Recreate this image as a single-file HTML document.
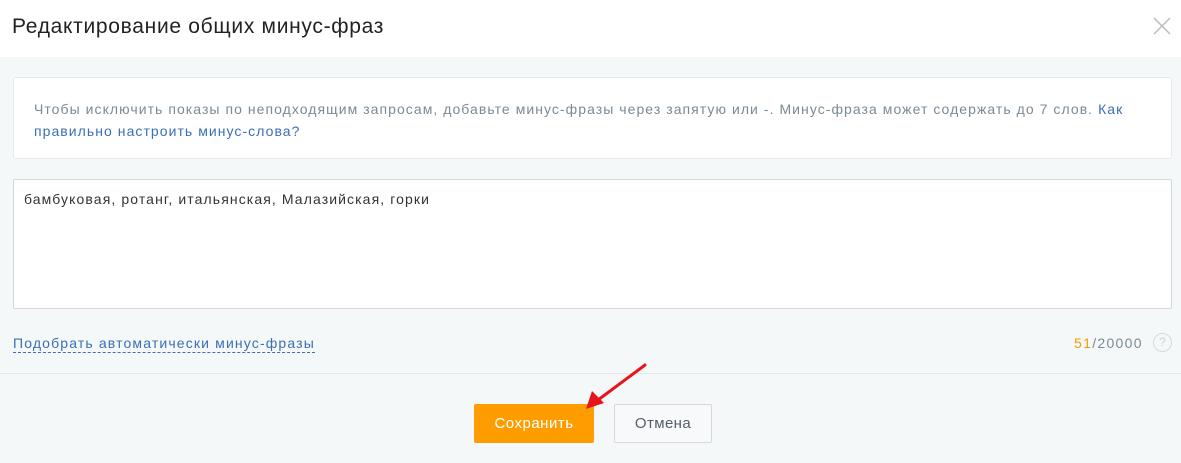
<!DOCTYPE html>
<html><head><meta charset="utf-8"><style>
body{margin:0;width:1181px;height:463px;overflow:hidden;background:#f5f8f9;font-family:"Liberation Sans",sans-serif;position:relative}
.hdr{position:absolute;left:0;top:0;width:1181px;height:57px;background:#fff}
.title{position:absolute;left:12px;top:15px;font-size:21px;color:#222;letter-spacing:0.7px}
.x{position:absolute;left:1153px;top:17px}
.info{position:absolute;left:13px;top:77px;width:1157px;height:80px;background:#fff;border:1px solid #e6eaec;border-radius:3px}
.info p{margin:0;position:absolute;left:20px;top:20px;right:20px;font-size:14px;line-height:22px;color:#7b8a94;letter-spacing:1.05px}
.info a{color:#3a6fb4;text-decoration:none}
.ta{position:absolute;left:13px;top:179px;width:1157px;height:128px;background:#fff;border:1px solid #d3d7da;border-radius:2px}
.ta span{position:absolute;left:10px;top:11px;font-size:14px;color:#333;letter-spacing:1.1px}
.auto{position:absolute;left:13px;top:334px;font-size:14px;color:#3a6fb4;border-bottom:1px dashed #3a6fb4;letter-spacing:1.15px;line-height:18px}
.cnt{position:absolute;left:1074px;top:335px;font-size:14px;color:#7b8a94;letter-spacing:1.3px}
.cnt b{font-weight:normal;color:#f59a00}
.q{position:absolute;left:1153px;top:333px;width:19px;height:19px;border:1.5px solid #d6dadc;border-radius:50%;box-sizing:border-box;color:#d0d4d6;font-size:12px;text-align:center;line-height:16px}
.div{position:absolute;left:0;top:373px;width:1181px;height:1px;background:#e3e7e9}
.save{position:absolute;left:474px;top:404px;width:120px;height:39px;background:#ff9d00;border-radius:2px;color:#fff;font-size:15px;text-align:center;line-height:39px;letter-spacing:0.5px}
.cancel{position:absolute;left:614px;top:404px;width:96px;height:37px;border:1px solid #d5d9db;background:#f7f9fa;border-radius:2px;color:#555e66;font-size:15px;text-align:center;line-height:37px;letter-spacing:0.4px}
</style></head><body>
<div class="hdr"></div>
<div class="title">Редактирование общих минус-фраз</div>
<svg class="x" width="18" height="18"><path d="M1 1L17 17M17 1L1 17" stroke="#b8bcbf" stroke-width="1.5"/></svg>
<div class="info"><p>Чтобы исключить показы по неподходящим запросам, добавьте минус-фразы через запятую или -. Минус-фраза может содержать до 7 слов. <a>Как правильно настроить минус-слова?</a></p></div>
<div class="ta"><span>бамбуковая, ротанг, итальянская, Малазийская, горки</span></div>
<div class="auto">Подобрать автоматически минус-фразы</div>
<div class="cnt"><b>51</b>/20000</div>
<div class="q">?</div>
<div class="div"></div>
<div class="save">Сохранить</div>
<div class="cancel">Отмена</div>
<svg style="position:absolute;left:0;top:0" width="1181" height="463"><path d="M645 365L598 400" stroke="#e8141b" stroke-width="3" stroke-linecap="round"/><path d="M586 409L592 391L604 403Z" fill="#e8141b"/></svg>
</body></html>
